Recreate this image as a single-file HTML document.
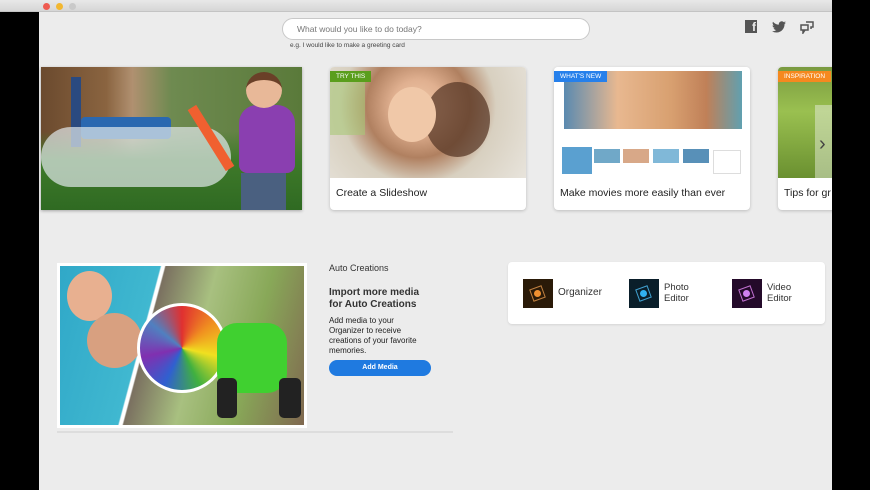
<!DOCTYPE html>
<html><head><meta charset="utf-8"><style>
*{margin:0;padding:0;box-sizing:border-box}
body{width:870px;height:490px;background:#000;position:relative;overflow:hidden;font-family:"Liberation Sans",sans-serif;color:#222}
.abs{position:absolute}
#tb{left:0;top:0;width:832px;height:12px;background:linear-gradient(#e8e8e8,#d6d6d6);border-bottom:1px solid #c4c4c4}
.dot{position:absolute;top:3px;width:7px;height:7px;border-radius:50%}
#main{left:39px;top:12px;width:793px;height:478px;background:#ececec}
.card{position:absolute;background:#fff;border-radius:4px;box-shadow:0 1px 3px rgba(0,0,0,.2);overflow:hidden}
.card .img{position:absolute;left:0;top:0;right:0;height:111px}
.card .t{position:absolute;left:6px;top:120px;font-size:10.5px;color:#222;white-space:nowrap}
.tag{position:absolute;left:0;top:4px;height:11px;padding:0 6px;font-size:6.5px;color:#fff;line-height:11px}
</style></head><body>
<div class="abs" id="tb">
<div class="dot" style="left:43px;background:#ee5a50"></div>
<div class="dot" style="left:56px;background:#f2b730"></div>
<div class="dot" style="left:69px;background:#c9c9c9"></div>
</div>
<div class="abs" id="main"></div>
<div class="abs" style="left:282px;top:18px;width:308px;height:22px;border:1px solid #c8c8c8;border-radius:11px;background:#fff;font-size:8.5px;color:#777;padding:5px 0 0 14px">What would you like to do today?</div>
<div class="abs" style="left:290px;top:42px;font-size:6.5px;color:#444">e.g. I would like to make a greeting card</div>
<div class="abs" style="left:745px;top:20px;width:12px;height:13px;background:#555;color:#ececec;font-weight:bold;font-size:12px;text-align:right;padding-right:1px;line-height:15px">f</div>
<svg class="abs" style="left:772px;top:21px" width="14" height="12" viewBox="0 0 24 20"><path fill="#555" d="M24 2.4a10 10 0 0 1-2.8.8A5 5 0 0 0 23.3.4a10 10 0 0 1-3.1 1.2A5 5 0 0 0 11.8 6 14 14 0 0 1 1.7.9a5 5 0 0 0 1.5 6.6 5 5 0 0 1-2.2-.6 5 5 0 0 0 3.9 4.8 5 5 0 0 1-2.2.1 5 5 0 0 0 4.6 3.4A10 10 0 0 1 0 17.3 14 14 0 0 0 7.5 19.5c9 0 14-7.5 14-14v-.6A10 10 0 0 0 24 2.4z"/></svg>
<svg class="abs" style="left:800px;top:20px" width="14" height="14" viewBox="0 0 14 14" fill="none" stroke="#555" stroke-width="1.5"><rect x="1" y="5" width="7" height="5"/><path d="M3 10v3l2-3"/><path d="M6 2h7v5h-2v2"/></svg>

<div class="abs" style="left:41px;top:67px;width:261px;height:143px;box-shadow:0 1px 3px rgba(0,0,0,.3);overflow:hidden;background:linear-gradient(180deg,rgba(0,0,0,0) 45%,#3f7a2a 65%,#2f6a22),linear-gradient(90deg,#6b4a2e 0,#8a6440 25%,#b09070 35%,#6e8a50 50%,#5a7a3a 100%)">
<div class="abs" style="left:30px;top:10px;width:10px;height:70px;background:#2a4a80"></div>
<div class="abs" style="left:40px;top:50px;width:90px;height:22px;background:#2a68b0;border-radius:4px"></div>
<div class="abs" style="left:0;top:60px;width:190px;height:60px;background:rgba(225,232,235,.7);border-radius:30px"></div>
<div class="abs" style="left:198px;top:38px;width:56px;height:68px;background:#8a3fb0;border-radius:18px 18px 8px 8px"></div>
<div class="abs" style="left:205px;top:5px;width:36px;height:36px;background:#e8b898;border-radius:50%;border-top:8px solid #6a4028"></div>
<div class="abs" style="left:200px;top:106px;width:45px;height:37px;background:#4a6080"></div>
<div class="abs" style="left:165px;top:35px;width:10px;height:72px;background:#f06030;transform:rotate(-32deg)"></div>
</div>

<div class="card" style="left:330px;top:67px;width:196px;height:143px">
<div class="img" style="background:radial-gradient(circle at 45% 35%,#f0c8a8 0,#e0b090 20%,#b08060 40%,#d8d0c0 60%,#e8e4dc 100%)"></div>
<div class="abs" style="left:95px;top:15px;width:65px;height:75px;background:#5a3a28;border-radius:50%;opacity:.75"></div>
<div class="abs" style="left:58px;top:20px;width:48px;height:55px;background:#f0c8a8;border-radius:50%"></div>
<div class="abs" style="left:0;top:8px;width:35px;height:60px;background:#a8c878;opacity:.6"></div>
<div class="tag" style="background:#5a9e1c">TRY THIS</div>
<div class="t">Create a Slideshow</div>
</div>

<div class="card" style="left:554px;top:67px;width:196px;height:143px">
<div class="img" style="background:#fff"></div>
<div class="abs" style="left:10px;top:4px;width:178px;height:58px;background:linear-gradient(90deg,#5a8ab0,#e8b890 30%,#d8a070 60%,#c08058 80%,#60a0b0)"></div>
<div class="abs" style="left:8px;top:80px;width:30px;height:27px;background:#5aa0d0"></div>
<div class="abs" style="left:40px;top:82px;width:26px;height:14px;background:#70a8c8"></div>
<div class="abs" style="left:69px;top:82px;width:26px;height:14px;background:#d8a888"></div>
<div class="abs" style="left:99px;top:82px;width:26px;height:14px;background:#80b8d8"></div>
<div class="abs" style="left:129px;top:82px;width:26px;height:14px;background:#5890b8"></div>
<div class="abs" style="left:159px;top:83px;width:28px;height:24px;border:1px solid #ddd"></div>
<div class="tag" style="background:#2680eb">WHAT'S NEW</div>
<div class="t">Make movies more easily than ever</div>
</div>

<div class="card" style="left:778px;top:67px;width:70px;height:143px;border-radius:4px 0 0 4px">
<div class="img" style="background:linear-gradient(180deg,#7a9a40,#9ac050 40%,#6a9030)"></div>
<div class="abs" style="left:37px;top:38px;width:17px;height:73px;background:rgba(230,235,220,.5)"></div>
<div class="abs" style="left:41px;top:66px;font-size:20px;color:#444">›</div>
<div class="tag" style="background:#f5891f">INSPIRATION</div>
<div class="t">Tips for gr</div>
</div>
<div class="abs" style="left:832px;top:12px;width:38px;height:478px;background:#000"></div>

<div class="abs" style="left:57px;top:263px;width:250px;height:165px;background:#fff;padding:3px;overflow:hidden">
<div class="abs" style="left:3px;top:3px;width:244px;height:159px;background:linear-gradient(105deg,#30a8c8 0,#40b8d0 35%,#fff 35.5%,#fff 36.5%,#7a7060 37%,#a8c080 55%,#88a858 75%,#806850 100%)"></div>
<div class="abs" style="left:10px;top:8px;width:45px;height:50px;background:#e8b090;border-radius:50%"></div>
<div class="abs" style="left:30px;top:50px;width:55px;height:55px;background:#d8a080;border-radius:50%"></div>
<div class="abs" style="left:80px;top:40px;width:90px;height:90px;border-radius:50%;border:3px solid #fff;background:conic-gradient(#e03030,#f09020,#f0e020,#40b040,#3060d0,#8030b0,#5080c0,#e03030)"></div>
<div class="abs" style="left:160px;top:60px;width:70px;height:70px;background:#40d030;border-radius:20px"></div>
<div class="abs" style="left:160px;top:115px;width:20px;height:40px;background:#222;border-radius:5px"></div>
<div class="abs" style="left:222px;top:115px;width:22px;height:40px;background:#222;border-radius:5px"></div>
</div>
<div class="abs" style="left:57px;top:431px;width:396px;height:2px;background:#ddd"></div>
<div class="abs" style="left:329px;top:263px;font-size:9px;color:#333">Auto Creations</div>
<div class="abs" style="left:329px;top:287px;font-size:10px;font-weight:bold;color:#333;line-height:12px">Import more media<br>for Auto Creations</div>
<div class="abs" style="left:329px;top:316px;font-size:8px;color:#222;line-height:10px">Add media to your<br>Organizer to receive<br>creations of your favorite<br>memories.</div>
<div class="abs" style="left:329px;top:360px;width:102px;height:16px;background:#1f7ae0;border-radius:8px;color:#fff;font-size:7px;font-weight:bold;text-align:center;line-height:16px">Add Media</div>

<div class="abs" style="left:508px;top:262px;width:317px;height:62px;background:#fff;border-radius:4px;box-shadow:0 1px 2px rgba(0,0,0,.1)"></div>
<div class="abs" style="left:523px;top:279px;width:30px;height:29px;background:#2a1a08"><div style="position:absolute;left:8px;top:8px;width:13px;height:13px;border:1px solid #c08040;transform:rotate(-20deg)"></div><div style="position:absolute;left:11px;top:11px;width:7px;height:7px;border-radius:50%;background:#f09030"></div></div>
<div class="abs" style="left:558px;top:287px;font-size:10px;color:#333">Organizer</div>
<div class="abs" style="left:629px;top:279px;width:30px;height:29px;background:#0a1e2a"><div style="position:absolute;left:8px;top:8px;width:13px;height:13px;border:1px solid #40a0d0;transform:rotate(-20deg)"></div><div style="position:absolute;left:11px;top:11px;width:7px;height:7px;border-radius:50%;background:#30b0f0"></div></div>
<div class="abs" style="left:664px;top:282px;font-size:9.5px;color:#333;line-height:11px">Photo<br>Editor</div>
<div class="abs" style="left:732px;top:279px;width:30px;height:29px;background:#240a2a"><div style="position:absolute;left:8px;top:8px;width:13px;height:13px;border:1px solid #c070d0;transform:rotate(-20deg)"></div><div style="position:absolute;left:11px;top:11px;width:7px;height:7px;border-radius:50%;background:#d080f0"></div></div>
<div class="abs" style="left:767px;top:282px;font-size:9.5px;color:#333;line-height:11px">Video<br>Editor</div>
</body></html>
